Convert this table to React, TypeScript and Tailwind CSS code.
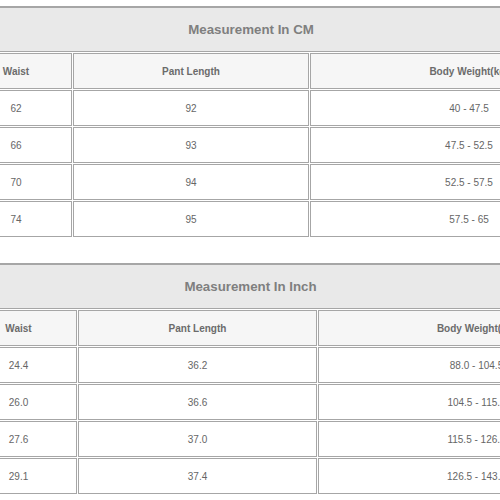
import React from "react";

type Spec = {
  title: string;
  ml: string;
  tw: string;
  widths: string[];
  rows: string[][];
};

const cm: Spec = {
  title: "Measurement In CM",
  ml: "ml-[-127px]",
  tw: "w-[756px]",
  widths: ["w-[85px]", "w-[112px]", "w-[236px]", "w-[318px]"],
  rows: [
    ["S", "62", "92", "40 - 47.5"],
    ["M", "66", "93", "47.5 - 52.5"],
    ["L", "70", "94", "52.5 - 57.5"],
    ["XL", "74", "95", "57.5 - 65"],
  ],
};

const inch: Spec = {
  title: "Measurement In Inch",
  ml: "ml-[-135px]",
  tw: "w-[771px]",
  widths: ["w-[93px]", "w-[117px]", "w-[239px]", "w-[317px]"],
  rows: [
    ["S", "24.4", "36.2", "88.0 - 104.5"],
    ["M", "26.0", "36.6", "104.5 - 115.5"],
    ["L", "27.6", "37.0", "115.5 - 126.5"],
    ["XL", "29.1", "37.4", "126.5 - 143.0"],
  ],
};

const headers = ["Size", "Waist", "Pant Length", "Body Weight(kg)"];

function SizeTable({ spec, top }: { spec: Spec; top: string }) {
  return (
    <table
      className={`${spec.ml} ${spec.tw} ${top} table-fixed border-separate border-spacing-[1px]`}
    >
      <colgroup>
        {spec.widths.map((w, i) => (
          <col key={i} className={w} />
        ))}
      </colgroup>
      <thead>
        <tr>
          <th
            colSpan={4}
            className="h-[46px] border border-t-2 border-[#a6a6a6] bg-[#e9e9e9] p-0 text-center align-middle text-[13.3px] font-bold text-[#7f7f7f]"
          >
            {spec.title}
          </th>
        </tr>
        <tr>
          {headers.map((h) => (
            <th
              key={h}
              className="h-[36px] border border-[#a6a6a6] bg-[#f6f6f6] p-0 text-center align-middle text-[10px] font-bold text-[#6b6b6b]"
            >
              {h}
            </th>
          ))}
        </tr>
      </thead>
      <tbody>
        {spec.rows.map((r, i) => (
          <tr key={i}>
            {r.map((c, j) => (
              <td
                key={j}
                className="h-[36px] border border-[#a6a6a6] bg-white p-0 text-center align-middle text-[10px] text-[#666666]"
              >
                {c}
              </td>
            ))}
          </tr>
        ))}
      </tbody>
    </table>
  );
}

export default function App() {
  return (
    <div
      className="h-[500px] w-[500px] overflow-hidden bg-white"
      style={{ fontFamily: '"Liberation Sans", Arial, sans-serif' }}
    >
      <SizeTable spec={cm} top="mt-[5px]" />
      <SizeTable spec={inch} top="mt-[24px]" />
    </div>
  );
}
